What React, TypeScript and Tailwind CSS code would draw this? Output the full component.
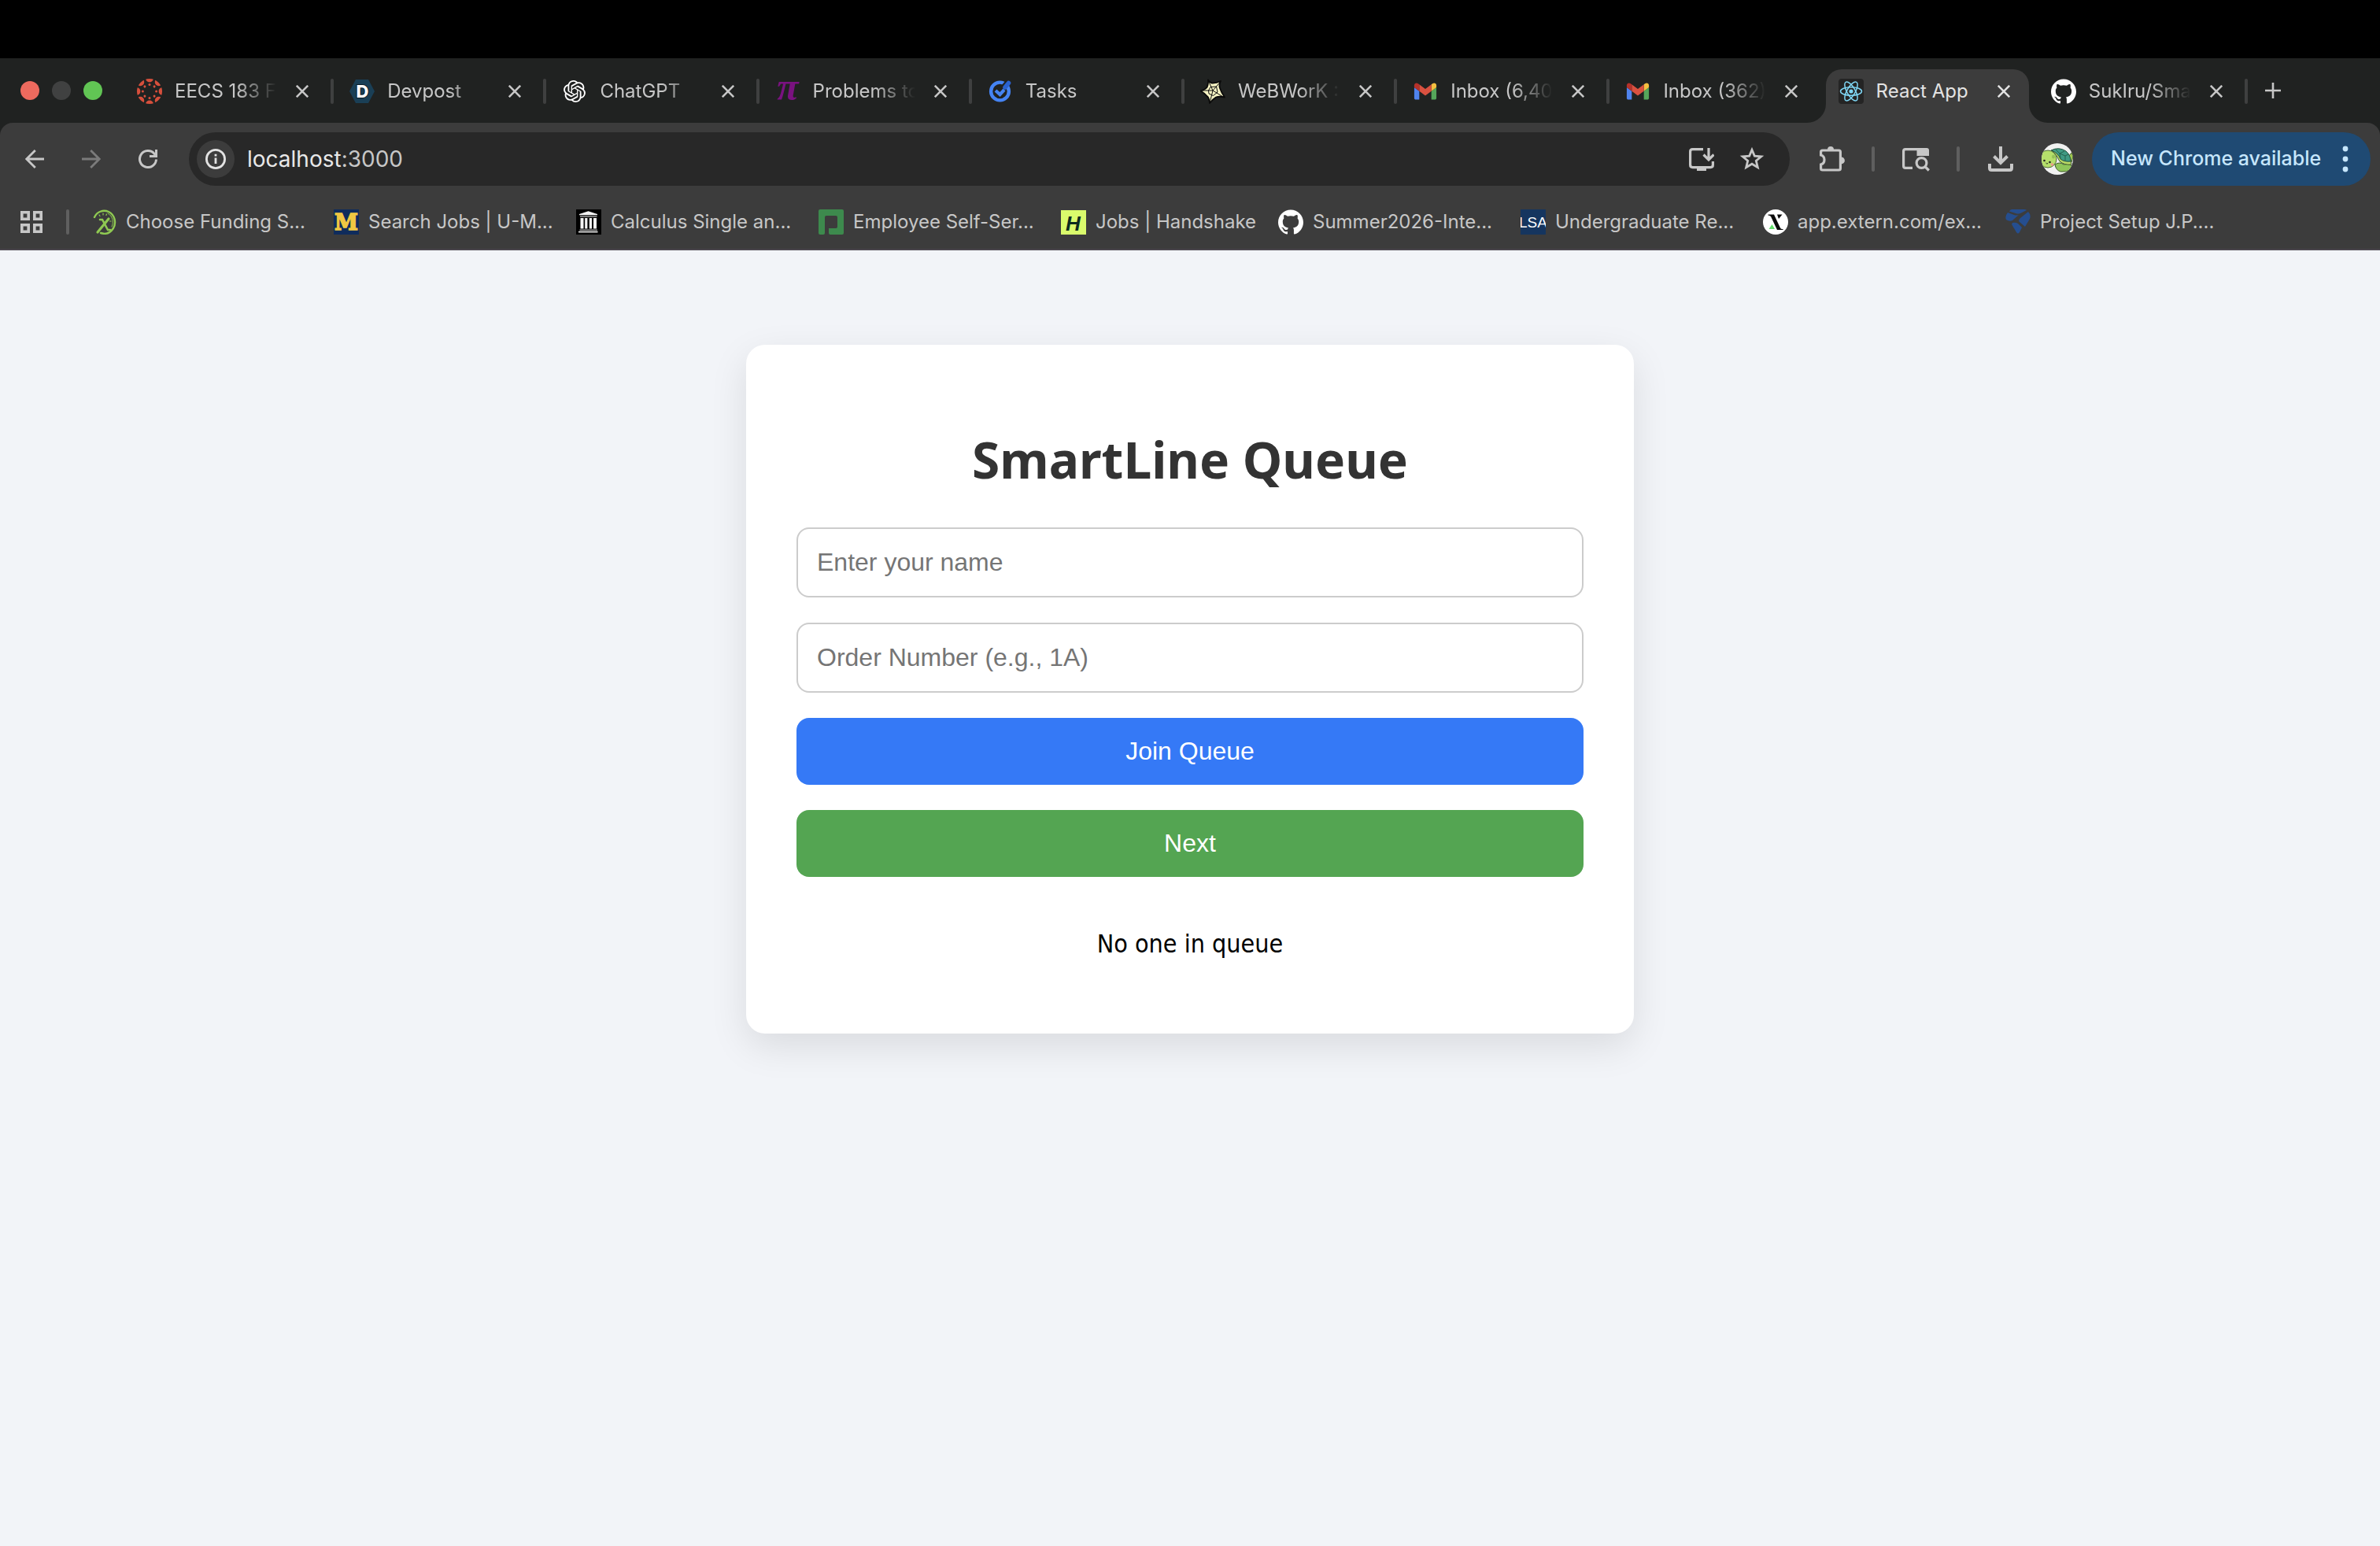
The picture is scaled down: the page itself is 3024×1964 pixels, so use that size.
import { useState, type FormEvent, type ReactNode } from 'react'
import { SiGithub, SiOpenai } from 'react-icons/si'

const eighths = [0, 45, 90, 135, 180, 225, 270, 315]

function CanvasIcon() {
  return (
    <svg viewBox="0 0 32 32" className="size-8 shrink-0" fill="#d64f3c">
      <clipPath id="canvas-disc">
        <circle cx="16" cy="16" r="16" />
      </clipPath>
      <g clipPath="url(#canvas-disc)">
        {eighths.map((deg) => (
          <g key={deg} transform={`rotate(${deg} 16 16)`}>
            <circle cx="16" cy="-.6" r="5" />
            <circle cx="16" cy="7.4" r="1.5" />
          </g>
        ))}
      </g>
    </svg>
  )
}

function DevpostIcon() {
  return (
    <svg viewBox="0 0 32 32" className="size-8 shrink-0">
      <path d="M8 1h16l8 15-8 15H8L0 16z" fill="#1a3f56" />
      <text x="16.5" y="24" textAnchor="middle" fontFamily="Inter, sans-serif" fontWeight="800" fontSize="22" fill="#fff" stroke="#0b1c28" strokeWidth="2" paintOrder="stroke">
        D
      </text>
    </svg>
  )
}

function PiIcon() {
  return (
    <svg viewBox="0 0 32 32" className="size-8 shrink-0">
      <text x="16" y="27" textAnchor="middle" fontFamily="Liberation Serif, serif" fontWeight="700" fontStyle="italic" fontSize="50" fill="#7a1280">
        π
      </text>
    </svg>
  )
}

function TasksIcon() {
  return (
    <svg viewBox="0 0 32 32" className="size-8 shrink-0" fill="none">
      <circle cx="15.500" cy="16" r="11.400" stroke="#4584f4" strokeWidth="4.400" />
      <path d="m20 11 5.500-6.500" stroke="#202221" strokeWidth="7" />
      <path d="m22 11 4.500-5.500" stroke="#2a62d0" strokeWidth="5.600" strokeLinecap="round" />
      <path d="m10 15 5.500 5 5.500-6" stroke="#4584f4" strokeWidth="4.200" />
    </svg>
  )
}

function WebworkIcon() {
  return (
    <svg viewBox="0 0 32 32" className="size-8 shrink-0" strokeLinejoin="round">
      <path
        d="M10 1.500Q12 5 14.500 5.500 20 6 26 3 23.500 7 25 12 27 18 31 23.500 24 22 20 23.500 16 26 12 31 11.500 25 9 22.500 5 18 .5 15.500 6 14 8.500 11 10.500 7 10 1.500z"
        fill="#f6f3c3"
        stroke="#0a0a0a"
        strokeWidth="1.800"
      />
      <path
        d="M10.500 3L16 15l9.500-11M16 15l13 8M16 15l-3.500 14M16 15H2M13 10.500l7.500-.5 1.500 7-5.500 4.500-5.500-2.500-.5-4z"
        fill="none"
        stroke="#0a0a0a"
        strokeWidth="1"
      />
    </svg>
  )
}

function GmailIcon() {
  return (
    <svg viewBox="46 25 100 100" className="size-8 shrink-0">
      <path d="M58 108h14V74L52 59v43c0 3.320 2.690 6 6 6" fill="#4f83ee" />
      <path d="M120 108h14c3.320 0 6-2.690 6-6V59l-20 15" fill="#55a55a" />
      <path d="M120 48v26l20-15v-8c0-7.420-8.470-11.650-14.400-7.200" fill="#f4bf40" />
      <path d="M72 74V48l24 18 24-18v26L96 92" fill="#d95140" />
      <path d="M52 51v8l20 15V48l-5.600-4.200c-5.940-4.450-14.400-.22-14.400 7.200" fill="#b5312a" />
    </svg>
  )
}

function ReactIcon() {
  return (
    <svg viewBox="0 0 32 32" className="size-8 shrink-0">
      <rect width="32" height="32" rx="4" fill="#242424" />
      <circle cx="16" cy="16" r="2.600" fill="#7fd6f4" />
      <g fill="none" stroke="#7fd6f4" strokeWidth="1.500">
        {[0, 60, 120].map((deg) => (
          <ellipse key={deg} cx="16" cy="16" rx="13.500" ry="5.200" transform={`rotate(${deg} 16 16)`} />
        ))}
      </g>
    </svg>
  )
}

function FundingIcon() {
  return (
    <svg viewBox="0 0 32 32" className="size-8 shrink-0" fill="none" stroke="#8fc952" strokeLinecap="round">
      <path d="M4 10C7 3 15 0 22 3c8 4 10 14 6 21-4 6-10 8-16 6" strokeWidth="2.400" />
      <path d="M21 5c6 3 8 11 5 17" strokeWidth="1" />
      <path d="M11 13h3l7 13h3" strokeWidth="2.600" />
      <path d="M22 12L8 29" strokeWidth="3.200" />
      <path d="M10 7l1 1.500M15 5v2M19.500 6l-.6 1.500M25 15h-1.500" strokeWidth="1.200" />
    </svg>
  )
}

function MichiganIcon() {
  return (
    <svg viewBox="0 0 32 32" className="size-8 shrink-0">
      <rect width="32" height="32" fill="#0f2c5c" />
      <text x="16" y="26" textAnchor="middle" fontFamily="DejaVu Serif, serif" fontWeight="700" fontSize="27" fill="#f0c742" stroke="#f0c742" strokeWidth="1.500">
        M
      </text>
    </svg>
  )
}

function ArchiveIcon() {
  return (
    <svg viewBox="0 0 32 32" className="size-8 shrink-0">
      <rect width="32" height="32" fill="#000" />
      <g fill="#f4f4f4">
        <path d="M4 6l11.500-3.800L27 6v1.200H4z" />
        <path d="M5 8.400h21.500v1.400H5z" opacity=".7" />
        <path d="M5.500 11h4v13.500h-4zM11.200 11h3.200v13.500h-3.200zM16.800 11H20v13.500h-3.200zM22 11h4v13.500h-4z" />
        <path d="M4.500 25.600h22.500v1.200H4.500z" opacity=".8" />
        <path d="M3 27.800h24.500v1.600H3z" />
      </g>
    </svg>
  )
}

function EmployeeIcon() {
  return (
    <svg viewBox="0 0 32 32" className="size-8 shrink-0">
      <path
        d="M2 0h28q2 0 2 2v28q0 2-2 2H15q-2 0-2-2v-6h9q2 0 2-2V10q0-2-2-2H10q-2 0-2 2v20q0 2-2 2H2q-2 0-2-2V2q0-2 2-2z"
        fill="#3d8a4d"
      />
    </svg>
  )
}

function HandshakeIcon() {
  return (
    <svg viewBox="0 0 32 32" className="size-8 shrink-0">
      <rect y="1" width="32" height="31" fill="#dafb6c" />
      <text x="15.500" y="27" textAnchor="middle" fontFamily="Liberation Sans Narrow, Liberation Sans, sans-serif" fontWeight="700" fontStyle="italic" fontSize="26" fill="#0d2b1f">
        H
      </text>
    </svg>
  )
}

function LsaIcon() {
  return (
    <svg viewBox="0 0 32 32" className="size-8 shrink-0">
      <rect width="32" height="32" fill="#15355f" />
      <text x="16" y="23" textAnchor="middle" fontFamily="Liberation Sans Narrow, Liberation Sans, sans-serif" fontSize="19" fill="#fff">
        LSA
      </text>
    </svg>
  )
}

function ExternIcon() {
  return (
    <svg viewBox="0 0 32 32" className="size-8 shrink-0">
      <circle cx="16" cy="16" r="16" fill="#fff" />
      <path d="M6.500 6.500H14l8 17q.8 1.500 2.500 1.500h1v1h-7.500L10 9Q9.200 7.500 6.500 7.500zM18 6.500h6.500L20 12z" fill="#0b0b0b" />
      <path d="M11.500 19l3.500 6H7.500z" fill="#63e06c" />
    </svg>
  )
}

function ForageIcon() {
  return (
    <svg viewBox="0 0 32 32" className="size-8 shrink-0" fill="#254e8f">
      <path d="M8 0h16q2 0 3 1l-8 4q-3 1-6 0L5 2.500Q6 0 8 0z" />
      <path d="M3 4l8 3q3 1 6 0l-8 7q-4 2-8-1Q-1 9 3 4z" />
      <path d="M29 3q4 4 2 9l-6 10-7-6q-2-2 1-5z" />
      <path d="M9 17q4-1 7 1l5 5-3 6q-2 3-4 0L8 19z" />
    </svg>
  )
}

function TurtleAvatar() {
  return (
    <svg viewBox="0 0 40 40" className="size-10">
      <clipPath id="avatar-disc">
        <circle cx="20" cy="20" r="20" />
      </clipPath>
      <g clipPath="url(#avatar-disc)" strokeWidth="1">
        <rect width="40" height="40" fill="#f1f1f1" />
        <path d="M33 19l5-7q3 4 0 12z" fill="#a7cf4f" stroke="#3d5a2a" />
        <path d="M17 27q6-4 11 0 5-1 8 0 5 3 2 6-6 4-14 3-6-2-7-9z" fill="#8fc65a" stroke="#3d5a2a" />
        <path d="M13 9q12-4 19 4 6 6 6 14-9 1-15-4-3-8-10-14z" fill="#b9d964" stroke="#3d5a2a" />
        <path d="M12 9q10-5 19 1 6 5 6 13-8 1-13-3-3-8-12-11z" fill="#3f9a83" stroke="#24523f" />
        <path d="M18 8l5 5 6-3M23 13l1 6M23 13l7 3 4-2M30 16l0 6" fill="none" stroke="#24624f" />
        <circle cx="8" cy="20" r="11" fill="#b5df6b" stroke="#4d6b35" />
        <ellipse cx="15" cy="17" rx="2" ry="2.600" fill="#93c157" />
        <circle cx="3.500" cy="22" r="1.300" fill="#222" />
        <circle cx="10.500" cy="24" r="1.300" fill="#222" />
        <path d="M5.500 25q1 1.600 2.600.6" fill="none" stroke="#222" />
        <circle cx="13.500" cy="27" r="1.800" fill="#ef9a8c" />
      </g>
    </svg>
  )
}

type Tab = { title: string; icon: ReactNode; active?: boolean }

const tabs: Tab[] = [
  { title: 'EECS 183 F.', icon: <CanvasIcon /> },
  { title: 'Devpost', icon: <DevpostIcon /> },
  { title: 'ChatGPT', icon: <SiOpenai className="mx-0.5 size-7 shrink-0 text-white" /> },
  { title: 'Problems to', icon: <PiIcon /> },
  { title: 'Tasks', icon: <TasksIcon /> },
  { title: 'WeBWorK :', icon: <WebworkIcon /> },
  { title: 'Inbox (6,40', icon: <GmailIcon /> },
  { title: 'Inbox (362)', icon: <GmailIcon /> },
  { title: 'React App', icon: <ReactIcon />, active: true },
  { title: 'SukIru/Sma', icon: <SiGithub className="size-8 shrink-0 text-white" /> },
]

const bookmarks = [
  { title: 'Choose Funding S...', icon: <FundingIcon /> },
  { title: 'Search Jobs | U-M...', icon: <MichiganIcon /> },
  { title: 'Calculus Single an...', icon: <ArchiveIcon /> },
  { title: 'Employee Self-Ser...', icon: <EmployeeIcon /> },
  { title: 'Jobs | Handshake', icon: <HandshakeIcon />, short: true },
  { title: 'Summer2026-Inte...', icon: <SiGithub className="size-8 shrink-0 text-white" /> },
  { title: 'Undergraduate Re...', icon: <LsaIcon /> },
  { title: 'app.extern.com/ex...', icon: <ExternIcon /> },
  { title: 'Project Setup J.P....', icon: <ForageIcon /> },
]

function CloseButton({ title }: { title: string }) {
  return (
    <button type="button" aria-label={`Close ${title}`} className="ml-2 shrink-0">
      <svg viewBox="0 0 16 16" className="size-4" fill="none" stroke="currentColor" strokeWidth="2.600">
        <path d="M.8.8l14.400 14.400M15.200.8L.8 15.200" />
      </svg>
    </button>
  )
}

function TabItem({ tab, divider }: { tab: Tab; divider: boolean }) {
  if (tab.active) {
    return (
      <li className="flex min-w-0">
        <div className="relative mt-[14px] mr-2 ml-1 flex min-w-0 flex-1 items-center gap-4 rounded-t-[20px] bg-[#3c3c3c] pr-6 pb-3 pl-4 text-[#e3e3e3]">
          <svg viewBox="0 0 24 24" className="absolute bottom-0 -left-6 size-6" fill="#3c3c3c">
            <path d="M24 0v24H0A24 24 0 0 0 24 0z" />
          </svg>
          <svg viewBox="0 0 24 24" className="absolute -right-6 bottom-0 size-6" fill="#3c3c3c">
            <path d="M0 0v24h24A24 24 0 0 1 0 0z" />
          </svg>
          {tab.icon}
          <span className="min-w-0 flex-1 overflow-hidden whitespace-nowrap">{tab.title}</span>
          <CloseButton title={tab.title} />
        </div>
      </li>
    )
  }

  return (
    <li className="flex min-w-0 items-center gap-4 pt-0.5 pl-5">
      {tab.icon}
      <span className="min-w-0 flex-1 overflow-hidden mask-r-from-60% mask-r-to-100% whitespace-nowrap">
        {tab.title}
      </span>
      <CloseButton title={tab.title} />
      <span className={`ml-3 h-8 w-1 shrink-0 rounded-full ${divider ? 'bg-[#3f4040]' : 'bg-transparent'}`} />
    </li>
  )
}

function TabStrip() {
  return (
    <div className="flex h-[82px] bg-[#202221] pl-[26px] text-2xl text-[#c7c7c7]">
      <div className="flex items-center gap-4">
        <span className="size-6 rounded-full bg-[#ed6a5e]" />
        <span className="size-6 rounded-full bg-[#404141]" />
        <span className="size-6 rounded-full bg-[#61c554]" />
      </div>
      <ul className="ml-6 grid min-w-0 flex-1 grid-cols-10">
        {tabs.map((tab, i) => (
          <TabItem key={i} tab={tab} divider={!tabs[i + 1]?.active} />
        ))}
      </ul>
      <div className="flex w-[168px] items-center pl-[22px]">
        <button type="button" aria-label="New tab">
          <svg viewBox="0 0 20 20" className="size-5" stroke="currentColor" strokeWidth="2.600">
            <path d="M10 0v20M0 10h20" />
          </svg>
        </button>
      </div>
    </div>
  )
}

function Divider() {
  return <span className="h-8 w-1 shrink-0 rounded-full bg-[#5f5f5f]" />
}

function Toolbar() {
  return (
    <div className="flex items-center pt-3 pr-3 pl-8 text-[#c7c7c7]">
      <div className="flex items-center gap-12">
        <button type="button" aria-label="Back">
          <svg viewBox="0 0 24 24" className="size-6" fill="none" stroke="currentColor" strokeWidth="2.800">
            <path d="M24 12H2M12.800 1L1.800 12l11 11" />
          </svg>
        </button>
        <button type="button" aria-label="Forward" className="text-[#7b7b7b]">
          <svg viewBox="0 0 24 24" className="size-6" fill="none" stroke="currentColor" strokeWidth="2.800">
            <path d="M0 12h22M11.200 1l11 11-11 11" />
          </svg>
        </button>
        <button type="button" aria-label="Reload">
          <svg viewBox="0 0 24 24" className="size-6" fill="none" stroke="currentColor" strokeWidth="3">
            <path d="M22.500 12.500A10.500 10.500 0 1 1 20 5.200l2 2.300" />
            <path d="M22.500 0v8.500H14" />
          </svg>
        </button>
      </div>

      <div className="mr-[38px] ml-10 flex h-[68px] min-w-0 flex-1 items-center rounded-full bg-[#282828] pr-8 pl-[10px]">
        <button
          type="button"
          aria-label="View site information"
          className="flex size-12 items-center justify-center rounded-full bg-[#3c3c3c] text-[#e3e3e3]"
        >
          <svg viewBox="0 0 26 26" className="size-[26px]" fill="none" stroke="currentColor" strokeWidth="2.800">
            <circle cx="13" cy="13" r="11.600" />
            <path d="M13 11.500v7.500M13 6.800v2.700" />
          </svg>
        </button>
        <span className="ml-4 flex-1 text-[28px] text-[#e8e8e8]">
          localhost<span className="text-[#c7c7c7]">:3000</span>
        </span>
        <button type="button" aria-label="Install app" className="mr-8">
          <svg viewBox="0 0 32 32" className="size-8" fill="none" stroke="currentColor" strokeWidth="3.200">
            <path d="M18 3.600H4.600q-3 0-3 3v17q0 3 3 3h22.800q3 0 3-3V19" />
            <path d="M10 27h12v4H10z" fill="currentColor" stroke="none" />
            <path d="M25 2v14M18.500 10.500l6.500 6.500 6.500-6.500" />
          </svg>
        </button>
        <button type="button" aria-label="Bookmark this tab">
          <svg viewBox="0 0 32 32" className="size-8" fill="none" stroke="currentColor" strokeWidth="2.800">
            <path d="M16 4.300l3.300 7.800 8.500.7-6.500 5.500 2 8.300L16 22.200l-7.300 4.400 2-8.300-6.500-5.500 8.500-.7z" />
          </svg>
        </button>
      </div>

      <div className="flex items-center gap-[34px]">
        <button type="button" aria-label="Extensions">
          <svg viewBox="0 0 32 32" className="size-8" fill="none" stroke="currentColor" strokeWidth="3.200">
            <path d="M1.600 11V7q0-2 2-2h20.800q2 0 2 2v21q0 2-2 2H3.600q-2 0-2-2v-5q4.400-1.200 4.400-6t-4.400-6z" />
            <path d="M10 4a4 4 0 0 1 8 0zM27.500 13.500a4.400 4.400 0 0 1 0 8.800z" fill="currentColor" stroke="none" />
          </svg>
        </button>
        <Divider />
        <button type="button" aria-label="Search side panel">
          <svg viewBox="0 0 36 32" className="h-8 w-9" fill="none" stroke="currentColor" strokeWidth="3.200">
            <path d="M14 27.400H5q-2.400 0-2.400-2.400V6q0-2.400 2.400-2.400h26.500" />
            <path d="M19.500 2H32q3 0 3 3v7H19.500z" fill="currentColor" stroke="none" />
            <circle cx="25.500" cy="21" r="6.400" />
            <path d="M29.800 25.500l5 5" />
          </svg>
        </button>
        <Divider />
      </div>
      <div className="ml-9 flex items-center gap-9">
        <button type="button" aria-label="Downloads">
          <svg viewBox="0 0 32 32" className="size-8" fill="none" stroke="currentColor" strokeWidth="4">
            <path d="M16 0v21M7.500 12.500l8.500 8.500 8.500-8.500" />
            <path d="M2 22v5.500Q2 30 4.500 30h23q2.500 0 2.500-2.500V22" />
          </svg>
        </button>
        <button type="button" aria-label="Profile">
          <TurtleAvatar />
        </button>
      </div>
      <button
        type="button"
        className="ml-6 flex h-[68px] w-[354px] items-center justify-between rounded-full bg-[#1f4a73] pr-7 pl-6 text-[25px] font-medium whitespace-nowrap text-[#c6e6fc]"
      >
        New Chrome available
        <svg viewBox="0 0 8 34" className="h-[34px] w-2" fill="currentColor">
          <circle cx="4" cy="4" r="3.400" />
          <circle cx="4" cy="17" r="3.400" />
          <circle cx="4" cy="30" r="3.400" />
        </svg>
      </button>
    </div>
  )
}

function BookmarksBar() {
  return (
    <nav className="flex h-20 items-center pt-3 pl-[26px] text-2xl text-[#c7c7c7]">
      <button type="button" aria-label="All apps">
        <svg viewBox="0 0 28 28" className="size-7" fill="none" stroke="currentColor" strokeWidth="3.600">
          <path d="M1.800 1.800h8.400v8.400H1.800zM17.800 1.800h8.400v8.400h-8.400zM1.800 17.800h8.400v8.400H1.800zM17.800 17.800h8.400v8.400h-8.400z" />
        </svg>
      </button>
      <span className="mr-7 ml-[30px] flex">
        <Divider />
      </span>
      <ul className="flex gap-8 whitespace-nowrap">
        {bookmarks.map((b) => (
          <li key={b.title} className={b.short ? 'w-[244px]' : 'w-[276px]'}>
            <a href="#" className="flex items-center gap-3">
              {b.icon}
              {b.title}
            </a>
          </li>
        ))}
      </ul>
    </nav>
  )
}

function QueueCard() {
  const [name, setName] = useState('')
  const [order, setOrder] = useState('')
  const [queue, setQueue] = useState<string[]>([])

  const join = (e: FormEvent) => {
    e.preventDefault()
    if (!name || !order) return
    setQueue([...queue, `${name} (${order})`])
    setName('')
    setOrder('')
  }

  const field =
    "w-full rounded-2xl border-2 border-[#cccccc] bg-white px-6 py-6 font-['Liberation_Sans',sans-serif] text-[32px] leading-[37px] text-black placeholder:text-[#757575]"
  const action =
    "w-full rounded-2xl py-6 font-['Liberation_Sans',sans-serif] text-[32px] leading-[37px] text-white"

  return (
    <section className="mx-auto w-full max-w-[1128px] rounded-3xl bg-white p-16 text-center shadow-[0_16px_48px_rgba(0,0,0,0.1)]">
      <h1 className="mt-11 mb-12 font-['Noto_Sans',sans-serif] text-[64px] leading-[76px] font-bold text-[#333333]">
        SmartLine Queue
      </h1>
      <form onSubmit={join} className="flex flex-col gap-8">
        <input
          aria-label="Enter your name"
          placeholder="Enter your name"
          value={name}
          onChange={(e) => setName(e.target.value)}
          className={field}
        />
        <input
          aria-label="Order Number"
          placeholder="Order Number (e.g., 1A)"
          value={order}
          onChange={(e) => setOrder(e.target.value)}
          className={field}
        />
        <button type="submit" className={`${action} bg-[#3579f6]`}>
          Join Queue
        </button>
        <button type="button" onClick={() => setQueue(queue.slice(1))} className={`${action} bg-[#54a552]`}>
          Next
        </button>
      </form>
      <div className="mt-[66px] mb-[30px] font-['DejaVu_Sans_Condensed','DejaVu_Sans',sans-serif] text-[32px] leading-[39px] text-black">
        {queue.length === 0 ? <p>No one in queue</p> : queue.map((q, i) => <p key={i}>{q}</p>)}
      </div>
    </section>
  )
}

export default function App() {
  return (
    <div className="flex min-h-screen flex-col bg-[#f2f4f8]">
      <header className="bg-[#202221] font-['Inter',sans-serif]">
        <div className="h-[74px] bg-black" />
        <TabStrip />
        <div className="rounded-t-2xl border-b-2 border-[#4a464c] bg-[#3c3c3c]">
          <Toolbar />
          <BookmarksBar />
        </div>
      </header>
      <main className="flex-1 px-8 pt-[120px]">
        <QueueCard />
      </main>
    </div>
  )
}
